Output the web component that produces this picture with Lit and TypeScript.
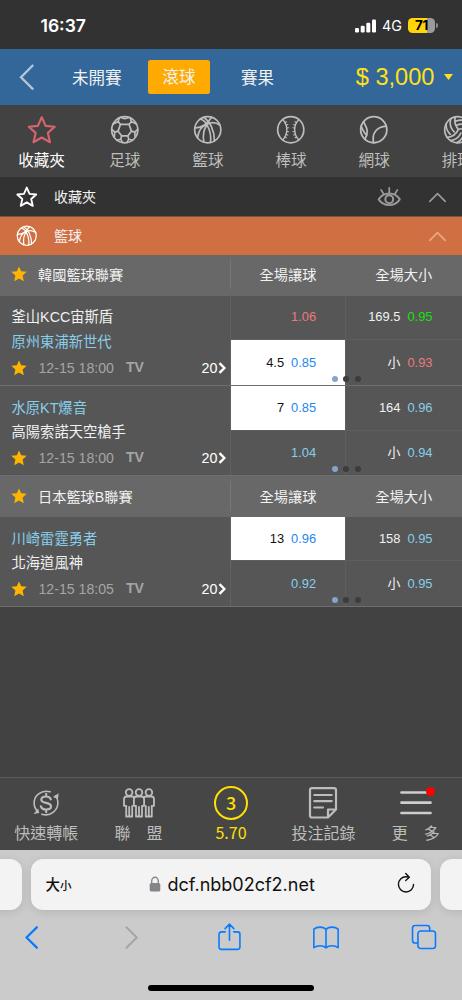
import { LitElement, html, css, svg, nothing } from "lit";
import { customElement, property } from "lit/decorators.js";

type Odd = { line?: string; price: string; tone: string; picked?: boolean };
type Match = { home: string; away: string; strong: "home" | "away"; time: string; odds: Odd[] };
type League = { name: string; matches: Match[] };

const LEAGUES: League[] = [
  {
    name: "韓國籃球聯賽",
    matches: [
      {
        home: "釜山KCC宙斯盾", away: "原州東浦新世代", strong: "away", time: "12-15 18:00",
        odds: [
          { price: "1.06", tone: "red" },
          { line: "169.5", price: "0.95", tone: "green" },
          { line: "4.5", price: "0.85", tone: "blue", picked: true },
          { line: "小", price: "0.93", tone: "red" },
        ],
      },
      {
        home: "水原KT爆音", away: "高陽索諾天空槍手", strong: "home", time: "12-15 18:00",
        odds: [
          { line: "7", price: "0.85", tone: "blue", picked: true },
          { line: "164", price: "0.96", tone: "sky" },
          { price: "1.04", tone: "sky" },
          { line: "小", price: "0.94", tone: "sky" },
        ],
      },
    ],
  },
  {
    name: "日本籃球B聯賽",
    matches: [
      {
        home: "川崎雷霆勇者", away: "北海道風神", strong: "home", time: "12-15 18:05",
        odds: [
          { line: "13", price: "0.96", tone: "blue", picked: true },
          { line: "158", price: "0.95", tone: "sky" },
          { price: "0.92", tone: "sky" },
          { line: "小", price: "0.95", tone: "sky" },
        ],
      },
    ],
  },
];

const SPORTS = [
  ["star", "收藏夾"], ["soccer", "足球"], ["basketball", "籃球"],
  ["baseball", "棒球"], ["tennis", "網球"], ["volleyball", "排球"],
];

const STAR = "M15 2.2L18.9 11L28.2 11.9L21.2 18.2L23.4 27.7L15 22.9L6.6 27.7L8.8 18.2L1.8 11.9L11.1 11Z";

const ICONS: Record<string, unknown> = {
  star: svg`<path d=${STAR} stroke-width="2.2"/>`,
  starBold: svg`<path d=${STAR} stroke-width="2.6"/>`,
  soccer: svg`<circle cx="15" cy="15" r="13.3"/>
    <path d="M10.6 9.6H19.4L21.8 16.4L18.2 21.2H11.8L8.2 16.4Z"/>
    <path d="M10.6 9.6L8.3 6.6L9.4 3M8.3 6.6L3.2 9.2M19.4 9.6L21.7 6.6L20.6 3M21.7 6.6L26.8 9.2M8.2 16.4L4.8 17.4L1.8 14.5M4.8 17.4L4.4 22.6M21.8 16.4L25.2 17.4L28.2 14.5M25.2 17.4L25.6 22.6M11.8 21.2L10.9 24.6L7 25.7M10.9 24.6L12.8 28M18.2 21.2L19.1 24.6L23 25.7M19.1 24.6L17.2 28M11 2.4Q15 5 19 2.4"/>`,
  basketball: svg`<circle cx="15" cy="15" r="13.3"/>
    <path d="M1.9 13C8 13.5 15 9.2 18.8 2.3M11 2.3C17.5 7 21.6 16 21.8 26.3M7.5 4C10 5 13.5 8 14.5 10.6C17.5 16 18.5 22 17.8 28M4.6 23.2C5.5 17 9 11.5 13.6 9.5C18 7.2 23.5 7.5 27.5 10.4M11 27.6C9.8 20 11 14 14.3 10"/>`,
  baseball: svg`<circle cx="15" cy="15" r="13.3"/>
    <path stroke-width="1.4" d="M6.8 4.6C12.4 10.5 12.4 19.5 6.8 25.4M23.2 4.6C17.6 10.5 17.6 19.5 23.2 25.4"/>
    <path stroke-width="1.1" d="M9 7.8L10.6 6.8M10.2 10.3L12 9.6M10.9 13.2L12.8 12.9M10.9 16.8L12.8 17.1M10.2 19.7L12 20.4M9 22.2L10.6 23.2M21 7.8L19.4 6.8M19.8 10.3L18 9.6M19.1 13.2L17.2 12.9M19.1 16.8L17.2 17.1M19.8 19.7L18 20.4M21 22.2L19.4 23.2"/>`,
  tennis: svg`<circle cx="15" cy="15" r="13.3" stroke-width="1.8"/>
    <path stroke-width="1.8" d="M4.6 6.8C6 10 8.2 12.5 8.4 16.5C8.4 19.5 7.4 22.5 5.8 24.6M27.7 11.4C19 12 12.6 17.5 14.8 28.2M2.2 11.5C4.2 16 6 19.5 8 20.4"/>`,
  volleyball: svg`<circle cx="15" cy="15" r="13.3"/>
    <path d="M15.6 14.6C12.4 11 11.4 6 12.6 2M11.4 17.2C7.6 13.6 6.6 8.4 8 3.8M7.4 19.6C4 16.4 2.8 12.6 3.4 8.8M15.6 14.6C13.5 19.5 9.5 22.5 4 22.8M18.2 18.4C16.2 22.4 12.6 25.4 7.6 26M20.6 22C19 24.8 16.8 27 13.8 28.2M15.6 14.6C20 13 25 14.5 28 18M13.4 10.6C18.5 8.5 24 9.5 27.6 12M12.6 6.4C17 4.6 21 5 24.5 6.5"/>`,
  eye: svg`<path d="M2 17.6C8.5 8 21.5 8 28 17.6C21.5 27 8.5 27 2 17.6Z" stroke-width="2.2"/><circle cx="15" cy="17.4" r="4.8" stroke-width="2.4"/>
    <path stroke-width="2.1" d="M15 9.8V3.4M8.2 11L5 6M21.8 11L25 6"/>`,
  up: svg`<path d="M4 20.5L15 9.5L26 20.5" stroke-width="2.4"/>`,
  transfer: svg`<path stroke-width="1.7" d="M19.5 3C10 .2 1.5 7.5 2.3 16.4Q2.6 20 5 23M10.5 27C20 30 28.3 22.6 27.7 13.5Q27.4 10 25.2 7.3"/>
    <path class="solid" d="M1.6 26.8L7.8 25.6L6.6 20.8ZM22.4 8.6L28.6 4.6L27.8 10.6Z"/>
    <path stroke-width="2.3" d="M20.2 11C19.3 8.7 17.4 8 15 8C12 8 10 9.4 10 11.5C10 16.2 20.4 13.5 20.4 18.5C20.4 20.7 18.2 22 15.2 22C12.4 22 10.3 21 9.5 18.6M15.2 5.2V8M15.2 22V24.8"/>`,
  union: svg`<g stroke-width="1.8"><circle cx="6.1" cy="4.5" r="3.3"/><circle cx="16" cy="4.5" r="3.3"/><circle cx="25.9" cy="4.5" r="3.3"/>
    <path d="M10.9 9.3Q10.3 8.5 8.7 8.5H3.6Q1 8.5 1 11.2V17.8H3.2V28.5H9.2V18M6.2 19V28M21.1 9.3Q21.7 8.5 23.3 8.5H28.4Q31 8.5 31 11.2V17.8H28.8V28.5H22.8V18M25.8 19V28"/>
    <path d="M13.5 8.5H18.5Q21.1 8.5 21.1 11.2V17.8H19V28.5H13V17.8H10.9V11.2Q10.9 8.5 13.5 8.5ZM16 19V28"/></g>`,
  record: svg`<path stroke-width="2.2" d="M4 1.2H26Q28 1.2 28 3.2V22.5L20 30.5H4Q2 30.5 2 28.5V3.2Q2 1.2 4 1.2ZM28 22.5H20V30.5M6.3 8H23.7M6.3 14.2H23.7M6.3 20.5H15"/>`,
  menu: svg`<path stroke-width="2.7" d="M1.5 5.5H30.5M1.5 15.7H30.5M1.5 26H30.5"/>`,
  share: svg`<path stroke-width="1.7" d="M11 9.5H6.8Q4.3 9.5 4.3 12V25.8Q4.3 28.3 6.8 28.3H24.2Q26.7 28.3 26.7 25.8V12Q26.7 9.5 24.2 9.5H20M15.5 18.5V1.5M10.8 6L15.5 1.2L20.2 6"/>`,
  book: svg`<path stroke-width="1.7" d="M15 7Q13 4.4 8.6 4.4Q4.5 4.4 2 6.5V26.4Q5 24.4 8.6 24.4Q12.7 24.4 15 26.6Q17.3 24.4 21.4 24.4Q25 24.4 28 26.4V6.5Q25.5 4.4 21.4 4.4Q17 4.4 15 7ZM15 7V26"/>`,
  tabs: svg`<rect x="8.5" y="8.5" width="18.8" height="18.8" rx="3"/><path d="M8.2 21.5H5.5Q2.7 21.5 2.7 18.7V5.5Q2.7 2.7 5.5 2.7H18.3Q21.1 2.7 21.1 5.5V8.2"/>`,
  reload: svg`<path stroke-width="2.1" d="M19.6 6.6Q17.6 5.6 15 5.6A11.4 11.4 0 1 0 26.4 17M14.6 .8L20 6.4L14.6 11.4"/>`,
  prev: svg`<path stroke-width="2.4" d="M20.5 4.5L9.8 15L20.5 25.5"/>`,
  next: svg`<path stroke-width="2.2" d="M9.8 4.5L20.5 15L9.8 25.5"/>`,
};

@customElement("ui-icon")
class UiIcon extends LitElement {
  @property() name = "";
  @property() box = "0 0 30 30";
  static styles = css`
    :host { display: block; flex: none; width: 28px; height: 28px; }
    svg { display: block; width: 100%; height: 100%; overflow: visible; fill: none; stroke: currentColor;
      stroke-width: 1.7; stroke-linecap: round; stroke-linejoin: round; }
    .solid { fill: currentColor; stroke: none; }
  `;
  render() {
    return html`<svg viewBox=${this.box}>${ICONS[this.name]}</svg>`;
  }
}

const goldStar = html`<svg class="gold" viewBox="0 0 16 16"><path d="M8 .4L10.2 5.3L15.7 5.8L11.6 9.5L12.8 15.2L8 12.4L3.2 15.2L4.4 9.5L.3 5.8L5.8 5.3Z"/></svg>`;

@customElement("match-row")
class MatchRow extends LitElement {
  @property({ attribute: false }) match!: Match;
  static styles = css`
    :host { display: grid; grid-template-columns: 230.5px 1fr; height: 90.3px; box-sizing: border-box;
      background: #565656; border-bottom: 1px solid #6e6e6e; position: relative;
      font-family: "Liberation Sans", "Noto Sans CJK TC", sans-serif; }
    .info { padding: 9.8px 4px 0 11.5px; border-right: 1px solid #626262; box-sizing: border-box; color: #f0f0f0; }
    .team { font-size: 14.3px; line-height: 24.6px; height: 24.6px; white-space: nowrap; }
    .sky { color: #87ceeb; }
    .meta { display: flex; align-items: center; height: 27px; font-size: 14.15px; color: #a5a5a5; }
    .gold { width: 16px; height: 16px; fill: #ffb400; margin: 0 11.5px 0 -.5px; }
    .tv { font-weight: bold; font-size: 14px; margin-left: 12px; padding-bottom: 2px; }
    .more { margin-left: auto; display: flex; align-items: center; color: #fff; font-size: 14.3px; }
    .more svg { width: 8px; height: 12px; fill: none; stroke: #fff; stroke-width: 2.4; }
    .odds { display: grid; grid-template-columns: 115px 1fr; grid-template-rows: 44.6px 1fr; }
    .cell { display: flex; align-items: center; justify-content: flex-end; gap: 7px; padding-right: 28.3px;
      font-size: 12.9px; line-height: 16px; color: #f2f2f2; border-right: 1px solid #5e5e5e; box-sizing: border-box; }
    .cell span { height: 16px; }
    .cell:nth-child(-n + 2) { border-bottom: 1px solid #5e5e5e; }
    .cell:nth-child(even) { border-right: 0; padding-right: 29.5px; }
    .picked { background: #fff; color: #111; }
    .red .p { color: #e87b7b; }
    .green .p { color: #13e213; }
    .blue .p { color: #1e87f0; }
    .dots { position: absolute; left: 332px; bottom: 3.2px; display: flex; gap: 5.3px; }
    .dots i { width: 6px; height: 6px; border-radius: 50%; background: #3c3c3c; }
    .dots i:first-child { background: #85a5c8; }
  `;
  render() {
    const m = this.match;
    return html`
      <div class="info">
        <div class="team ${m.strong === "home" ? "sky" : ""}">${m.home}</div>
        <div class="team ${m.strong === "away" ? "sky" : ""}">${m.away}</div>
        <div class="meta">${goldStar}<span>${m.time}</span><span class="tv">TV</span>
          <span class="more">20<svg viewBox="0 0 8 12"><path d="M1.5 1.2L6.4 6L1.5 10.8"/></svg></span></div>
      </div>
      <div class="odds">
        ${m.odds.map((o) => html`<div class="cell ${o.tone} ${o.picked ? "picked" : ""}">
          ${o.line ? html`<span>${o.line}</span>` : nothing}<span class="p ${o.tone}">${o.price}</span></div>`)}
      </div>
      <div class="dots"><i></i><i></i><i></i></div>`;
  }
}

@customElement("app-root")
class AppRoot extends LitElement {
  static styles = css`
    :host { display: flex; flex-direction: column; height: 1000px; width: 462px; overflow: hidden; background: #424242;
      font-family: "Noto Sans CJK TC", sans-serif; color: #f2f2f2; }
    .status { height: 49px; background: #323232; display: flex; align-items: center; padding: 2px 24.5px 0 40.5px; box-sizing: border-box;
      font-family: Inter, sans-serif; flex: none; color: #fff; }
    .clock { font-size: 17.5px; font-weight: 600; flex: 1; }
    .signal { width: 22px; height: 14px; fill: #fff; }
    .net { font-size: 14.3px; margin: 0 6px 0 5.5px; }
    .battery { width: 27px; height: 15px; border-radius: 4.5px; background: linear-gradient(90deg, #ffd60a 72%, #9b9b9b 72%);
      color: #000; font-size: 13.5px; font-weight: 700; line-height: 15px; text-align: center; letter-spacing: -.4px; }
    .nub { width: 1.6px; height: 5px; border-radius: 0 2px 2px 0; background: #8b8b8b; margin-left: 1px; }
    .top { height: 56px; background: #336699; display: flex; align-items: center; flex: none; font-size: 16.5px; padding-right: 9px; }
    .back { width: 16px; height: 28px; margin-left: 19px; fill: none; stroke: #b4c7da; stroke-width: 2.3; }
    .tab { margin-left: 37px; }
    .on { margin-left: 26.5px; width: 62px; height: 34px; line-height: 32px; text-align: center; background: #ffaa00; border-radius: 2.5px; }
    .res { margin-left: 31px; }
    .tab, .res { padding-bottom: 1px; }
    .money { margin-left: auto; font: 23.6px "Liberation Sans", sans-serif; color: #ffe11a; }
    .caret { width: 9px; height: 6px; fill: #ffe11a; margin-left: 9.5px; }
    .sports { display: flex; height: 72px; flex: none; overflow: hidden; }
    .sport { flex: 0 0 83.16px; display: flex; flex-direction: column; align-items: center; padding: 9.5px 0 0; box-sizing: border-box;
      font-size: 15.6px; line-height: 24px; gap: 3.2px; color: #bebebe; }
    .sport ui-icon { width: 29.5px; height: 29.5px; }
    .sport.fav { color: #fff; }
    .sport.fav ui-icon { color: #d3656b; }
    .bar { height: 39.6px; flex: none; background: #323232; display: flex; align-items: center; padding: 0 14px 0 16px; box-sizing: border-box;
      font-size: 14px; border-bottom: 1px solid #7b5541; }
    .bar > ui-icon:first-child { width: 21.5px; height: 21.5px; color: #fff; margin-right: 16.5px; }
    .bar span { flex: 1; padding-bottom: 1px; }
    .bar .eye { width: 24.5px; height: 24.5px; color: #9b9b9b; margin: 1px 26px 0 0; }
    .bar .up { width: 21px; height: 21px; color: #9a9a9a; margin-top: 2px; }
    .orange { background: #d07042; height: 38.6px; border: 0; }
    .orange .up { color: #e6a888; }
    .lg { display: grid; grid-template-columns: 230.5px 115px 1fr; height: 40.5px; flex: none; align-items: center; background: #686868;
      font-size: 14.2px; text-align: center; box-sizing: border-box; padding-bottom: 2px; }
    .lg .name { display: flex; align-items: center; padding-left: 10.5px; border-right: 1px solid #777; height: 30px; box-sizing: border-box;
      font-family: "Liberation Sans", "Noto Sans CJK TC", sans-serif; }
    .gold { width: 16px; height: 16px; fill: #ffb400; margin-right: 11.5px; }
    .fill { flex: 1; }
    .dock { height: 73px; flex: none; border-top: 1px solid #5a5a5a; box-sizing: border-box; background: #464646; display: flex; color: #bdbdbd; }
    .dock div { flex: 1; display: flex; flex-direction: column; align-items: center; font-size: 16px; line-height: 24px; position: relative;
      white-space: pre; padding-top: 41.7px; box-sizing: border-box; height: 72px; }
    .dock ui-icon { position: absolute; top: 8.5px; width: 32px; height: 32px; }
    .dock .union { top: 9px; }
    .dock .cash { width: 28px; height: 28px; top: 10.5px; }
    .dock .more { color: #cecece; }
    .dock b { position: absolute; top: 7.5px; width: 34px; height: 34px; box-sizing: border-box; border: 2px solid #ffe000; border-radius: 50%;
      line-height: 28px; text-align: center; font-size: 18px; font-weight: 500; }
    .dock .slip { color: #ffe000; }
    .dock i { position: absolute; width: 9px; height: 9px; background: #f00; border-radius: 50%; top: 9px; left: 56.5px; }
    .safari { height: 150px; flex: none; background: #cbcbcb; font-family: Inter, sans-serif; color: #111; box-sizing: border-box; padding-top: 8.5px; }
    .urls { display: flex; gap: 9px; height: 51px; margin: 0 -100px; justify-content: center; }
    .card { background: #f3f3f3; border-radius: 12px; width: 400px; flex: none; box-sizing: border-box; box-shadow: 0 2px 10px #0000001c;
      display: flex; align-items: center; padding: 0 15.5px 0 14.5px; }
    .aa { font: 500 14.5px "Noto Sans CJK TC", sans-serif; width: 103px; padding-bottom: 2px; }
    .aa small { font-size: 11.5px; }
    .lock { width: 12px; height: 16px; margin-right: 7px; }
    .url { font-size: 18px; flex: 1; }
    .card ui-icon { width: 20px; height: 20px; margin-bottom: 2px; }
    .tools { display: flex; color: #0a7aff; margin-top: 13.5px; height: 30px; padding-left: 17px; }
    .tools .arrow { width: 29px; height: 29px; }
    .tools .next { color: #a6a6a6; margin-left: 71px; }
    .tools .share { margin-left: 68.5px; }
    .tools .book { margin-left: 69.5px; }
    .tools .tabs { margin-left: 70px; }
    .home { width: 166px; height: 5.5px; border-radius: 3px; background: #000; margin: 32.3px auto 0; }
  `;
  render() {
    return html`
      <div class="status"><span class="clock">16:37</span>
        <svg class="signal" viewBox="0 0 22 14"><rect x="0" y="9" width="4" height="4.5" rx="1.2"/><rect x="5.7" y="6.8" width="4" height="6.7" rx="1.2"/><rect x="11.3" y="3.8" width="4" height="9.7" rx="1.2"/><rect x="17" y=".5" width="4" height="13" rx="1.2"/></svg>
        <span class="net">4G</span><span class="battery">71</span><span class="nub"></span></div>
      <div class="top">
        <svg class="back" viewBox="0 0 16 28"><path d="M14.2 2L2 14.3L14.2 26.4"/></svg>
        <span class="tab">未開賽</span><span class="on">滾球</span><span class="res">賽果</span>
        <span class="money">$ 3,000</span><svg class="caret" viewBox="0 0 9 6"><path d="M0 0H9L4.5 6Z"/></svg>
      </div>
      <div class="sports">${SPORTS.map(([icon, label], i) => html`
        <div class="sport ${i ? "" : "fav"}"><ui-icon name=${icon}></ui-icon><span>${label}</span></div>`)}</div>
      <div class="bar"><ui-icon name="starBold"></ui-icon><span>收藏夾</span><ui-icon class="eye" name="eye"></ui-icon><ui-icon class="up" name="up"></ui-icon></div>
      <div class="bar orange"><ui-icon name="basketball"></ui-icon><span>籃球</span><ui-icon class="up" name="up"></ui-icon></div>
      ${LEAGUES.map((l) => html`
        <div class="lg"><div class="name">${goldStar}${l.name}</div><div>全場讓球</div><div>全場大小</div></div>
        ${l.matches.map((m) => html`<match-row .match=${m}></match-row>`)}`)}
      <div class="fill"></div>
      <div class="dock">
        <div><ui-icon class="cash" name="transfer"></ui-icon>快速轉帳</div>
        <div><ui-icon class="union" name="union" box="0 0 32 30"></ui-icon>聯　盟</div>
        <div class="slip"><b>3</b>5.70</div>
        <div><ui-icon name="record" box="0 0 30 32"></ui-icon>投注記錄</div>
        <div><ui-icon class="more" name="menu" box="0 0 32 32"></ui-icon>更　多<i></i></div>
      </div>
      <div class="safari">
        <div class="urls"><div class="card"></div>
          <div class="card"><span class="aa">大<small>小</small></span>
            <svg class="lock" viewBox="0 0 12 16"><path d="M2.7 8V5A3.3 3.7 0 0 1 9.3 5V8" fill="none" stroke="#858589" stroke-width="1.4"/><rect x=".7" y="7" width="10.6" height="8.5" rx="1.6" fill="#858589"/></svg>
            <span class="url">dcf.nbb02cf2.net</span><ui-icon name="reload"></ui-icon></div>
          <div class="card"></div></div>
        <div class="tools"><ui-icon class="arrow" name="prev"></ui-icon><ui-icon class="arrow next" name="next"></ui-icon><ui-icon class="share" name="share"></ui-icon><ui-icon class="book" name="book"></ui-icon><ui-icon class="tabs" name="tabs"></ui-icon></div>
        <div class="home"></div>
      </div>`;
  }
}
